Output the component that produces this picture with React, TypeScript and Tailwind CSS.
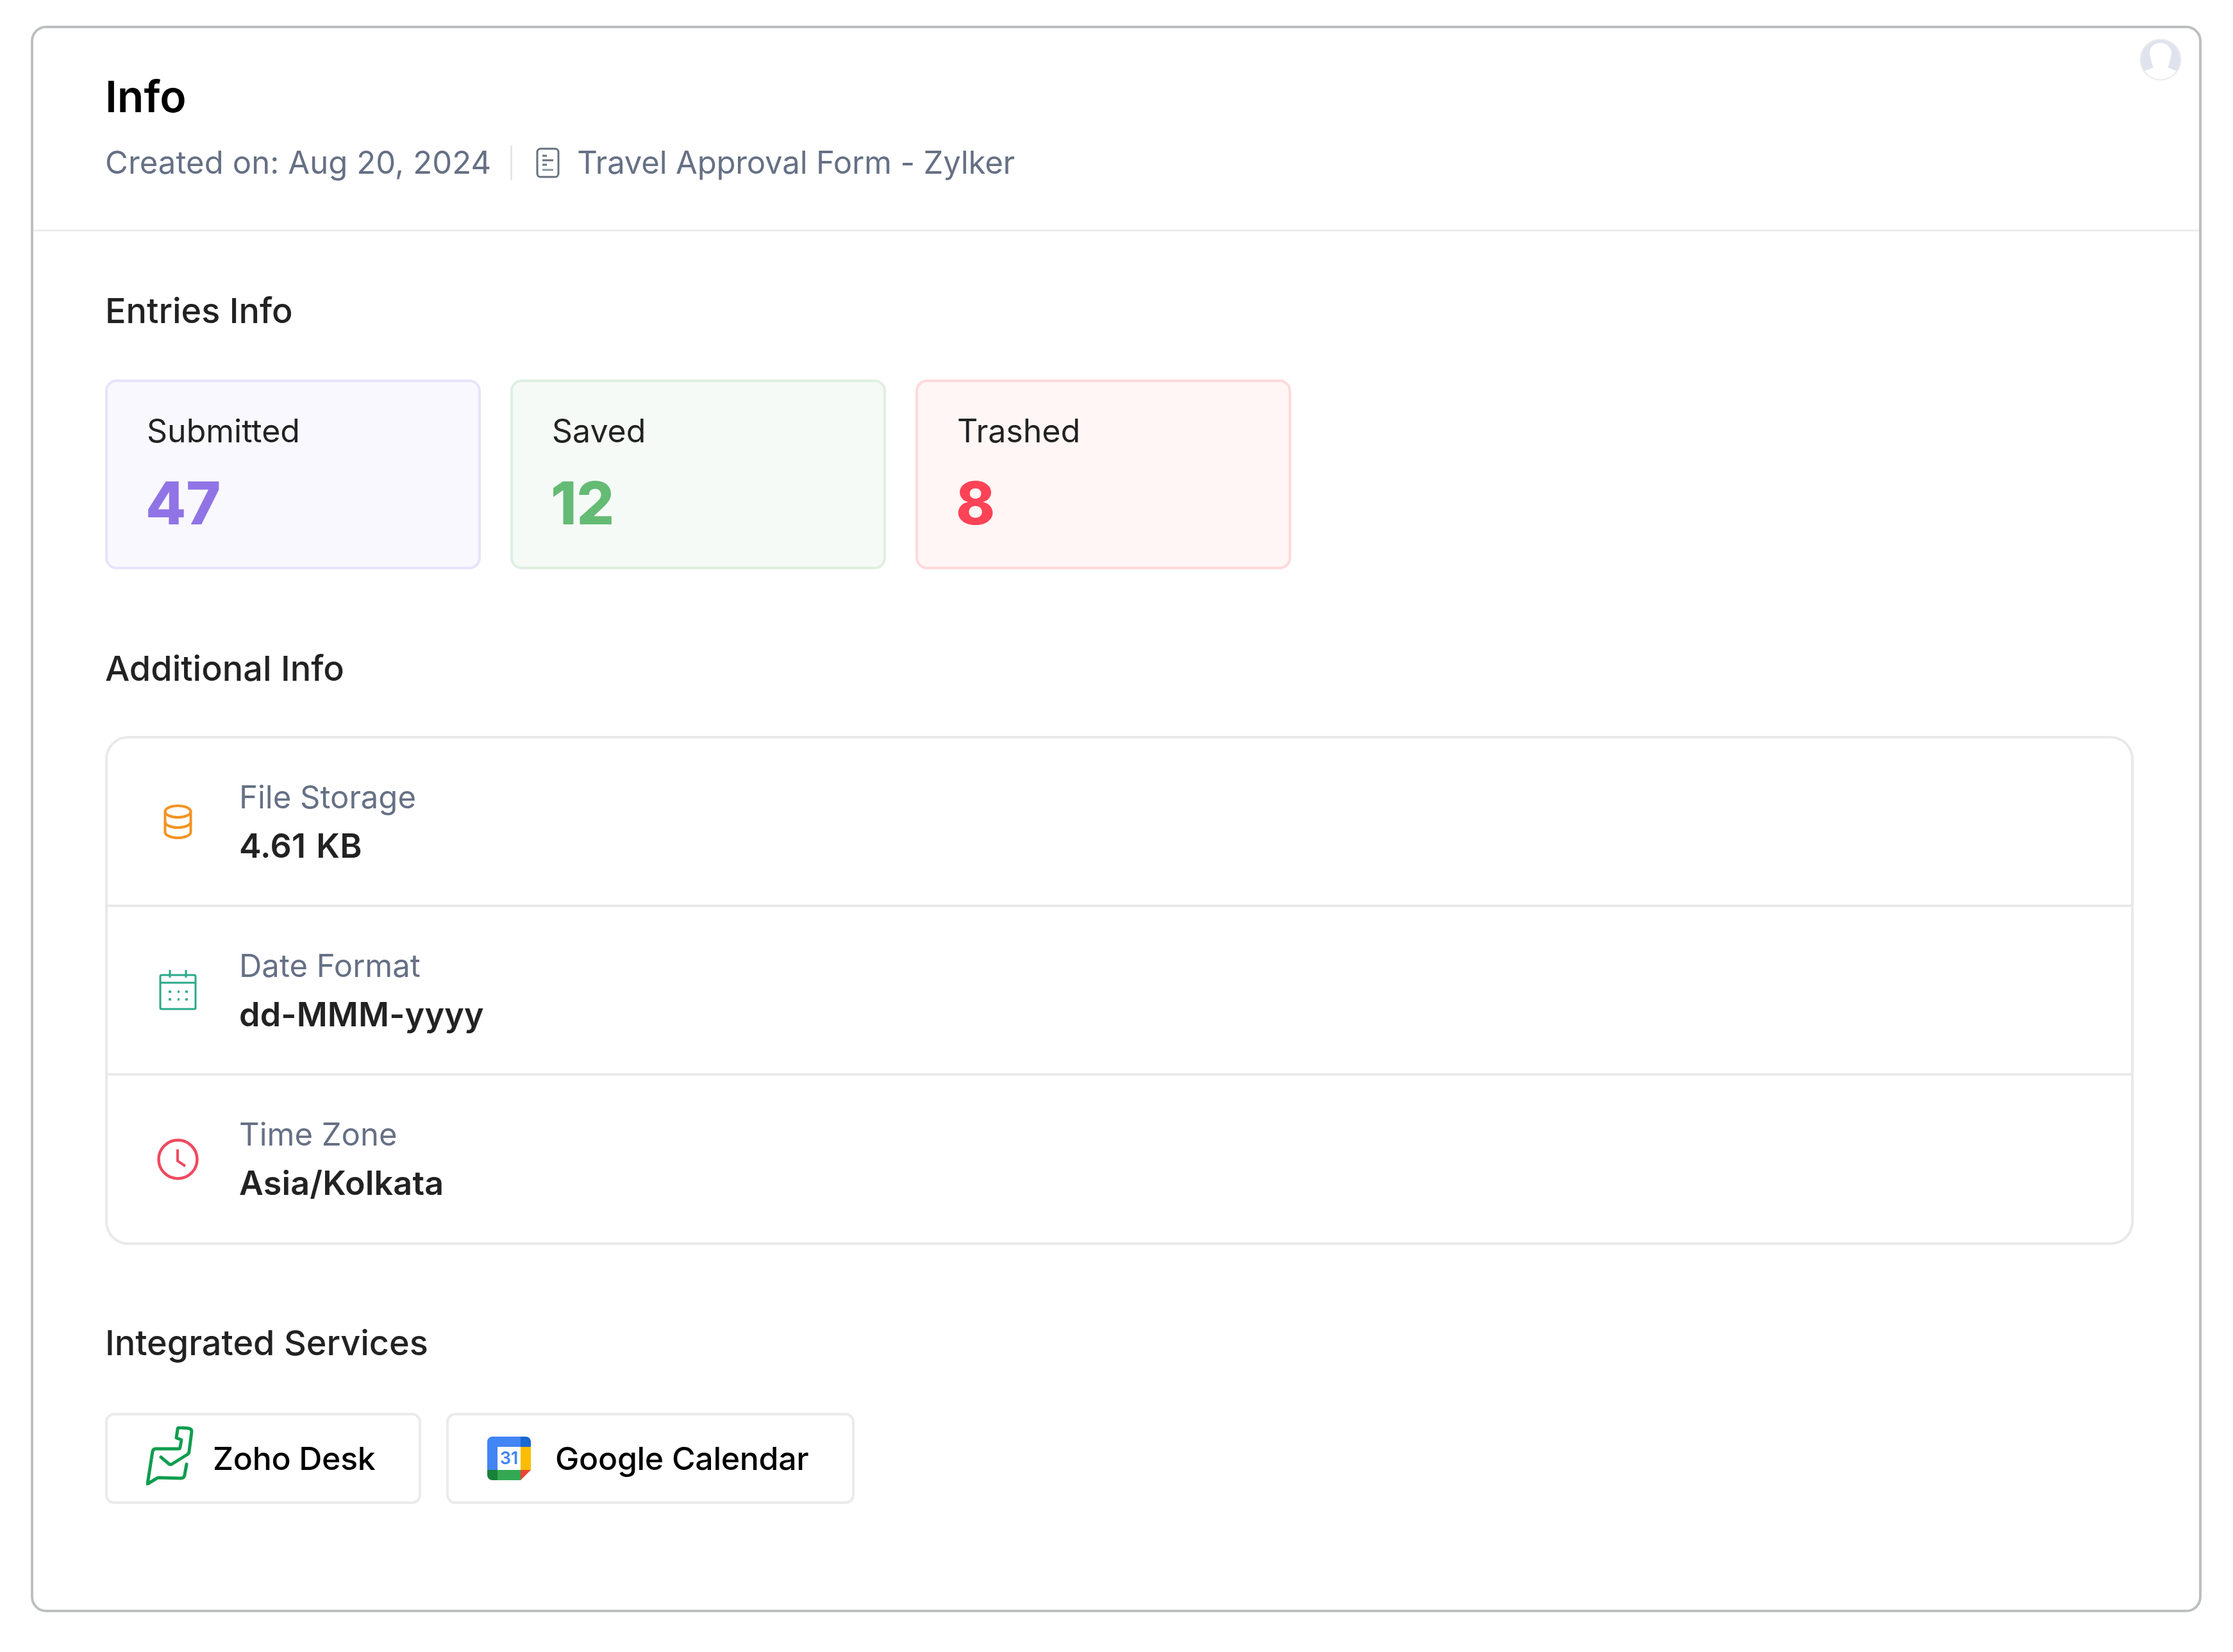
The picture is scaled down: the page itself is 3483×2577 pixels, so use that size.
import type { ReactNode } from "react"

function DocIcon() {
  return (
    <svg viewBox="0 0 37 48" className="w-[37px] h-[48px] shrink-0 ml-[37px] mr-[29px]" fill="none" stroke="#67717f" strokeWidth="3">
      <rect x="2" y="2" width="33" height="44" rx="5" />
      <path d="M10 13h7M10 20h17M10 27h7" strokeWidth="3" />
      <path d="M10 35h17" strokeWidth="3" stroke="#8a93a0" />
    </svg>
  )
}

function DatabaseIcon() {
  return (
    <svg viewBox="0 0 45 54" className="w-[45px] h-[54px]" fill="none" stroke="#f39323" strokeWidth="4">
      <ellipse cx="22.5" cy="11" rx="20" ry="9" />
      <path d="M2.5 11v32c0 5 9 9 20 9s20-4 20-9V11" />
      <path d="M2.5 27c0 5 9 9 20 9s20-4 20-9" />
    </svg>
  )
}

function CalendarIcon() {
  return (
    <svg viewBox="0 0 59 63" className="w-[59px] h-[63px]" fill="none" stroke="#2aa98a" strokeWidth="3">
      <rect x="2" y="8" width="55" height="53" rx="2" />
      <path d="M2 20h55M17 0v12M42 0v12" />
      <path d="M15 34h4M29 34h3M41 34h4M15 46h4M29 46h3M41 46h4" strokeWidth="3.5" />
    </svg>
  )
}

function ClockIcon() {
  return (
    <svg viewBox="0 0 65 65" className="w-[65px] h-[65px]" fill="none" stroke="#ef4a60" strokeWidth="4.5">
      <circle cx="32.5" cy="32.5" r="30" />
      <path d="M32 17v18l12 8" strokeWidth="4" />
    </svg>
  )
}

function ZohoDeskIcon() {
  return (
    <svg viewBox="0 0 74 92" className="w-[74px] h-[92px] shrink-0 -mt-[8px]" fill="none" stroke="#0f9d4e" strokeWidth="5" strokeLinejoin="round" strokeLinecap="round">
      <path d="M63 59 L60 76 Q59 81 54 81 L20 80 Q17 80 15 82 L2 90 L10 39 Q11 35 15 35 L50 35 Q53 35 53 32 L55 21 L47 18 L49 5 Q49 2 52 2 L66 3 Q71 4 71 8 L67 39 Q67 42 64 44 L40 59 Q38 60 36 59 L23 48" />
    </svg>
  )
}

function GoogleCalendarIcon() {
  return (
    <svg viewBox="0 0 68 68" className="w-[68px] h-[68px] shrink-0">
      <path d="M8 0h46v16H16v36H0V8a8 8 0 0 1 8-8z" fill="#4285f4" />
      <path d="M52 0h8a8 8 0 0 1 8 8v8H52z" fill="#1967d2" />
      <rect x="52" y="16" width="16" height="36" fill="#fbbc04" />
      <rect x="16" y="52" width="36" height="16" fill="#34a853" />
      <path d="M0 52h16v16H8a8 8 0 0 1-8-8z" fill="#188038" />
      <path d="M52 52h16L52 68z" fill="#ea4335" />
      <rect x="16" y="16" width="36" height="36" fill="#fff" />
      <text x="34" y="43" textAnchor="middle" fontSize="27" fontWeight="600" fill="#4285f4" fontFamily="Inter, sans-serif">31</text>
    </svg>
  )
}

function Avatar() {
  return (
    <svg viewBox="0 0 66 66" className="absolute top-[16px] right-[27px] w-[66px] h-[66px]">
      <clipPath id="avatar-clip">
        <circle cx="33" cy="33" r="31" />
      </clipPath>
      <circle cx="33" cy="33" r="31.5" fill="#dfe3ee" />
      <path
        d="M33 7C22 7 16 14 16 23c0 6 3 10 3 15 1 3 2 5 3 7l-14 6c6 8 15 13 25 13s19-5 25-13l-14-6c1-2 2-4 3-7 0-5 3-9 3-15 0-9-7-16-17-16z"
        fill="#fff"
        clipPath="url(#avatar-clip)"
      />
      <circle cx="33" cy="33" r="31.5" fill="none" stroke="#ececec" strokeWidth="2" />
    </svg>
  )
}

function StatCard({ label, value, box, color }: { label: string; value: string; box: string; color: string }) {
  return (
    <div className={`w-[586px] h-[296px] rounded-[18px] border-[4px] pl-[61px] pt-[46px] ${box}`}>
      <p className="text-[50px] leading-[60px] text-[#222]">{label}</p>
      <p className={`-ml-[2px] mt-[33px] text-[92px] leading-[100px] font-extrabold ${color}`}>{value}</p>
    </div>
  )
}

function InfoRow({ icon, label, value, last }: { icon: ReactNode; label: string; value: string; last?: boolean }) {
  return (
    <div className={`flex items-center ${last ? "h-[260px]" : "h-[263px] border-b-[4px] border-[#e9e9e9]"}`}>
      <div className="w-[205px] flex justify-center shrink-0 pl-[14px]">{icon}</div>
      <div>
        <p className="text-[49px] leading-[76px] text-[#667085]">{label}</p>
        <p className="text-[52px] leading-[76px] tracking-[0.2px] [word-spacing:3px] font-semibold text-[#222]">{value}</p>
      </div>
    </div>
  )
}

function ServiceButton({ icon, label, width, gap }: { icon: ReactNode; label: string; width: string; gap: string }) {
  return (
    <div className={`flex items-center h-[142px] pl-[60px] rounded-[14px] border-[4px] border-[#ebebeb] ${width} ${gap}`}>
      {icon}
      <span className="text-[50px] tracking-[-0.3px] font-medium text-black">{label}</span>
    </div>
  )
}

export default function App() {
  return (
    <div className="h-[2577px] bg-white pl-[48px] pt-[40px] font-['Inter',sans-serif]">
      <div className="relative w-[3386px] h-[2475px] rounded-[24px] border-[4px] border-[#bdbfc1]">
        <Avatar />
        <div className="h-[317px] border-b-[3px] border-[#ededed] pl-[112px] pt-[58px]">
          <h1 className="text-[68px] leading-[96px] font-semibold text-black">Info</h1>
          <div className="mt-[24px] flex items-center text-[49px] leading-[64px] text-[#667085]">
            <span className="tracking-[0.1px]">Created on: Aug 20, 2024</span>
            <span className="ml-[30px] w-[3px] h-[54px] bg-[#e4e6ea]" />
            <DocIcon />
            <span className="-ml-[2px] tracking-[-0.15px]">Travel Approval Form - Zylker</span>
          </div>
        </div>

        <div className="pl-[112px]">
          <h2 className="mt-[88px] text-[54px] leading-[72px] font-medium text-[#222]">Entries Info</h2>
          <div className="mt-[71px] flex gap-[46px]">
            <StatCard label="Submitted" value="47" box="bg-[#f9f8fe] border-[#e7e3fa]" color="text-[#9074e6]" />
            <StatCard label="Saved" value="12" box="bg-[#f5faf6] border-[#dfefe2]" color="text-[#64bb74]" />
            <StatCard label="Trashed" value="8" box="bg-[#fff6f5] border-[#ffd9db]" color="text-[#ff4357]" />
          </div>

          <h2 className="mt-[119px] text-[54px] leading-[72px] font-medium text-[#222]">Additional Info</h2>
          <div className="mt-[69px] w-[3164px] rounded-[36px] border-[4px] border-[#e9e9e9] bg-white">
            <InfoRow icon={<DatabaseIcon />} label="File Storage" value="4.61 KB" />
            <InfoRow icon={<CalendarIcon />} label="Date Format" value="dd-MMM-yyyy" />
            <InfoRow icon={<ClockIcon />} label="Time Zone" value="Asia/Kolkata" last />
          </div>

          <h2 className="mt-[117px] text-[54px] leading-[72px] font-medium text-[#222]">Integrated Services</h2>
          <div className="mt-[73px] flex gap-[39px]">
            <ServiceButton icon={<ZohoDeskIcon />} label="Zoho Desk" width="w-[493px]" gap="gap-[30px]" />
            <ServiceButton icon={<GoogleCalendarIcon />} label="Google Calendar" width="w-[637px]" gap="gap-[38px]" />
          </div>
        </div>
      </div>
    </div>
  )
}
